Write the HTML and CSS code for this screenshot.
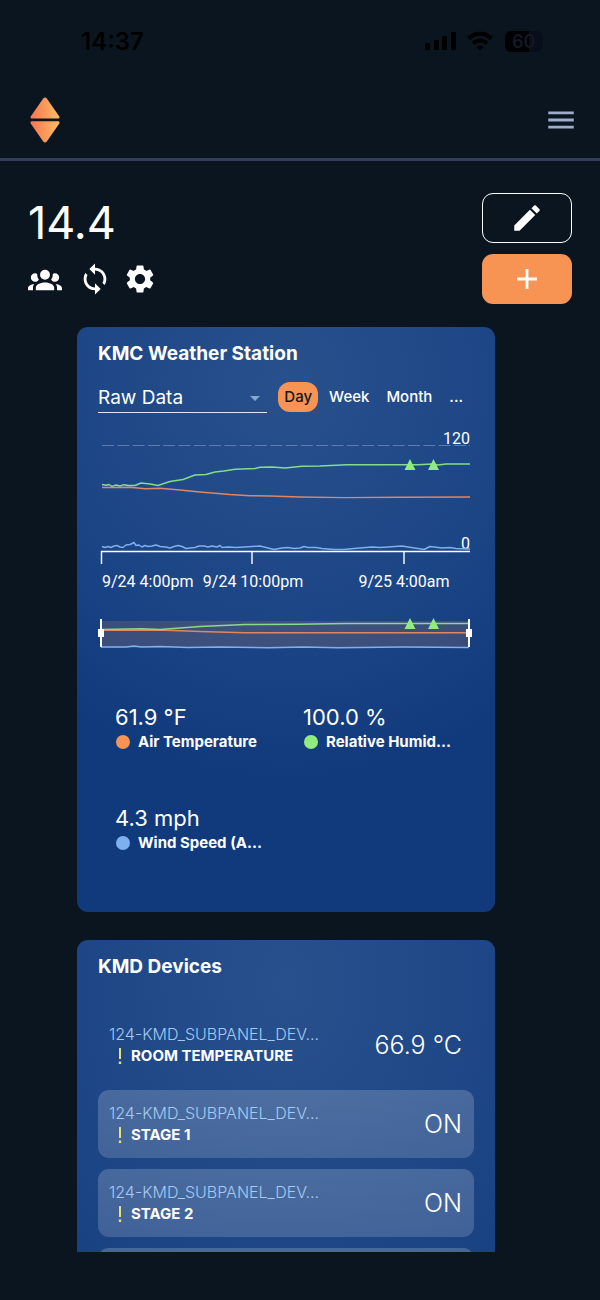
FILE: index.html
```html
<!DOCTYPE html>
<html lang="en">

<head>
    <meta charset="UTF-8">
    <meta name="viewport" content="width=device-width, initial-scale=1.0">
    <title>14.4</title>
    <link rel="stylesheet" href="styles.css">
</head>

<body>
    <div class="status-bar">
        <span class="time">14:37</span>
        <div class="status-icons">
            <svg width="32" height="20" viewBox="0 0 32 20">
                <rect x="0" y="12" width="5" height="7" rx="1"/>
                <rect x="9" y="9" width="5" height="10" rx="1"/>
                <rect x="17" y="5" width="5" height="14" rx="1"/>
                <rect x="26" y="1" width="5" height="18" rx="1"/>
            </svg>
            <svg width="26" height="20" viewBox="0 0 26 20" fill="none" stroke="#000" stroke-width="4">
                <path d="M1.5 7.500C8 1 18 1 24.500 7.500"/>
                <path d="M6 12.500C10 8.500 16 8.500 20 12.500"/>
                <path d="M13 19.500L9.500 16C11.500 14 14.500 14 16.500 16Z" fill="#000" stroke="none"/>
            </svg>
            <span class="battery">60</span>
        </div>
    </div>

    <header class="top-bar">
        <a href="#" class="logo" aria-label="Home">
            <svg width="30" height="46" viewBox="0 0 30 46">
                <defs>
                    <linearGradient id="flame" x1="0" y1="0" x2="1" y2="0">
                        <stop offset="0.1" stop-color="#fb7a52"/>
                        <stop offset="0.9" stop-color="#fdb863"/>
                    </linearGradient>
                </defs>
                <path fill="url(#flame)" d="M13.200 1.500Q15 -.5 16.800 1.500L29.300 19.500Q30 21.500 28 21.500H2Q0 21.500 .7 19.500Z"/>
                <path fill="url(#flame)" d="M13.200 44.500Q15 46.500 16.800 44.500L29.300 26.500Q30 24.300 28 24.300H2Q0 24.300 .7 26.500Z"/>
            </svg>
        </a>
        <button class="icon-btn menu-btn" aria-label="Menu">
            <svg viewBox="0 0 24 24"><path d="M3 18h18v-2H3v2zm0-5h18v-2H3v2zm0-7v2h18V6H3z"/></svg>
        </button>
    </header>

    <main>
        <section class="page-head">
            <div>
                <h1>14.4</h1>
                <div class="tools">
                    <button class="icon-btn people" aria-label="Users">
                        <svg viewBox="0 0 24 24"><path d="M12,5.5A3.5,3.5 0 0,1 15.5,9A3.5,3.5 0 0,1 12,12.5A3.5,3.5 0 0,1 8.500,9A3.5,3.5 0 0,1 12,5.5M5,8C5.56,8 6.08,8.15 6.53,8.42C6.38,9.85 6.8,11.27 7.66,12.38C7.16,13.34 6.16,14 5,14A3,3 0 0,1 2,11A3,3 0 0,1 5,8M19,8A3,3 0 0,1 22,11A3,3 0 0,1 19,14C17.84,14 16.84,13.34 16.34,12.38C17.2,11.27 17.62,9.85 17.47,8.42C17.92,8.15 18.44,8 19,8M5.5,18.25C5.5,16.18 8.41,14.5 12,14.5C15.59,14.5 18.5,16.18 18.5,18.25V20H5.5V18.25M0,20V18.5C0,17.11 1.89,15.94 4.45,15.6C3.86,16.28 3.5,17.22 3.5,18.25V20H0M24,20H20.5V18.25C20.5,17.22 20.14,16.28 19.55,15.6C22.11,15.94 24,17.11 24,18.5V20Z"/></svg>
                    </button>
                    <button class="icon-btn" aria-label="Sync">
                        <svg viewBox="0 0 24 24"><path d="M12 4V1L8 5l4 4V6c3.31 0 6 2.69 6 6 0 1.01-.25 1.97-.7 2.8l1.46 1.46C19.54 15.03 20 13.57 20 12c0-4.42-3.58-8-8-8zm0 14c-3.31 0-6-2.69-6-6 0-1.01.25-1.97.7-2.8L5.24 7.74C4.46 8.97 4 10.43 4 12c0 4.42 3.58 8 8 8v3l4-4-4-4v3z"/></svg>
                    </button>
                    <button class="icon-btn" aria-label="Settings">
                        <svg viewBox="0 0 24 24"><path d="M19.14 12.94c.04-.3.06-.61.06-.94 0-.32-.02-.64-.07-.94l2.03-1.58c.18-.14.23-.41.12-.61l-1.92-3.32c-.12-.22-.37-.29-.59-.22l-2.39.96c-.5-.38-1.030-.7-1.620-.94l-.36-2.540c-.04-.24-.24-.41-.48-.41h-3.840c-.24 0-.43.17-.47.41l-.36 2.540c-.59.24-1.130.57-1.620.94l-2.390-.96c-.22-.08-.47 0-.59.22L2.740 8.870c-.12.21-.08.47.12.61l2.030 1.580c-.05.3-.09.63-.09.94s.02.64.07.94l-2.030 1.580c-.18.14-.23.41-.12.61l1.920 3.320c.12.22.37.29.59.22l2.390-.96c.5.38 1.030.7 1.620.94l.36 2.540c.05.24.24.41.48.41h3.840c.24 0 .44-.17.47-.41l.36-2.540c.59-.24 1.130-.56 1.620-.94l2.390.96c.22.08.47 0 .59-.22l1.920-3.320c.12-.22.07-.47-.12-.61l-2.010-1.580zM12 15.600c-1.980 0-3.600-1.620-3.600-3.600s1.620-3.600 3.600-3.600 3.600 1.620 3.600 3.600-1.620 3.600-3.600 3.600z"/></svg>
                    </button>
                </div>
            </div>
            <div class="actions">
                <button class="action edit" aria-label="Edit">
                    <svg viewBox="0 0 24 24"><path d="M3 17.250V21h3.750L17.810 9.940l-3.750-3.750L3 17.250zM20.710 7.040c.39-.39.39-1.020 0-1.410l-2.340-2.340c-.39-.39-1.020-.39-1.410 0l-1.830 1.830 3.750 3.750 1.830-1.830z"/></svg>
                </button>
                <button class="action add" aria-label="Add">
                    <svg viewBox="0 0 24 24"><path d="M19 13h-6v6h-2v-6H5v-2h6V5h2v6h6v2z"/></svg>
                </button>
            </div>
        </section>

        <section class="cards">
            <article class="card weather">
                <h2>KMC Weather Station</h2>
                <div class="controls">
                    <div class="select-box">
                        <select aria-label="Data type">
                            <option>Raw Data</option>
                        </select>
                    </div>
                    <div class="ranges">
                        <button class="range active">Day</button>
                        <button class="range">Week</button>
                        <button class="range">Month</button>
                        <button class="range">...</button>
                    </div>
                </div>

                <svg class="chart" viewBox="0 0 376 226">
                    <path class="grid" d="M4 20.500H372"/>
                    <text x="372" y="19" text-anchor="end">120</text>
                    <text x="372" y="124" text-anchor="end">0</text>
                    <path class="axis" d="M3.500 139V126.500H372M154 126.500V139M306 126.500V139"/>
                    <text x="4" y="162">9/24 4:00pm</text>
                    <text x="155" y="162" text-anchor="middle">9/24 10:00pm</text>
                    <text x="306" y="162" text-anchor="middle">9/25 4:00am</text>

                    <!-- main series -->
                    <path class="line temp" d="M4 62.500L32 62.300L47 63.700L62 63.300L82 65L102 67L132 69.500L152 70.700L172 71L202 72L247 72.600L302 72.300L372 72"/>
                    <path class="line humid" d="M4 59.500L8 60.300L11 59.500L14 61.300L18 60L22 61L26 59.700L30 60.500L37 60.500L43 58L52 59L60 60.500L66 58.500L72 56.500L85 54.500L97 50L108 49.500L117 47L126 46L137 44.300L157 43.500L162 42.200L174 42L187 43L204 41.300L222 41L249 39.800H320L334 39L340 40L348 39H372"/>
                    <path class="line wind" d="M4 121.500L7 122.500L10 121.500L13 122.500L16 121L19 120.500L22 122L25 122.500L28 120L32 119.500L36 117.500L38 120.500L41 120L44 122L47 120.500L50 121.500L54 121L58 120L62 121.500L68 122L72 123L76 121.500L80 120.500L84 121.500L88 123.500L92 123L97 122.500L101 121L106 121L110 122L114 121L119 122L122 120.500L124 122.500L130 122L138 122.500L146 122L154 121.500L162 121L170 123L176 124.500L184 123L190 122.500L196 123.500L202 123L206 121.500L210 122.500L218 122.500L224 123.500L236 124.500L246 124.500L256 123.500L268 122.500L274 122L282 122.500L290 122L304 121L310 122L320 123.500L326 124.500L332 121.500L344 123L352 122.500L358 123.500L372 124"/>
                    <path class="mark" d="M312 34L317.500 45H306.500ZM335.500 34L341 45H330Z"/>

                    <!-- range selector -->
                    <rect class="window" x="3" y="196" width="368" height="27"/>
                    <path class="line wind" d="M3 222L28 222L36 221L44 222L62 221.500L90 222.500L122 222L170 222.700L206 222L240 222.700L304 222L371 222.500"/>
                    <path class="line temp" d="M3 205.200L62 205L102 206.500L147 207.800L371 207.800"/>
                    <path class="line humid" d="M3 204.500L44 203.800L62 204.500L102 201.500L147 199.500L200 199.300L249 198.500H371"/>
                    <path class="mark" d="M312 193L317.500 204H306.500ZM335.500 193L341 204H330Z"/>
                    <path class="handle" d="M2 194h2v28H2zM0 204h6v8H0zM370 194h2v28h-2zM368 204h6v8h-6z"/>
                </svg>

                <ul class="stats">
                    <li>
                        <div class="stat-value">61.9 °F</div>
                        <div class="stat-label"><i class="dot orange"></i><span>Air Temperature</span></div>
                    </li>
                    <li>
                        <div class="stat-value">100.0 %</div>
                        <div class="stat-label"><i class="dot green"></i><span>Relative Humid...</span></div>
                    </li>
                    <li>
                        <div class="stat-value">4.3 mph</div>
                        <div class="stat-label"><i class="dot blue"></i><span>Wind Speed (A...</span></div>
                    </li>
                </ul>
            </article>

            <article class="card devices">
                <h2>KMD Devices</h2>
                <ul class="device-list">
                    <li class="device plain">
                        <div>
                            <div class="device-name">124-KMD_SUBPANEL_DEV...</div>
                            <div class="point"><svg class="alert" viewBox="0 0 4 16"><path d="M1 0h2v11H1zM.8 13.500h2.400V16H.8z"/></svg>ROOM TEMPERATURE</div>
                        </div>
                        <div class="device-value">66.9 °C</div>
                    </li>
                    <li class="device">
                        <div>
                            <div class="device-name">124-KMD_SUBPANEL_DEV...</div>
                            <div class="point"><svg class="alert" viewBox="0 0 4 16"><path d="M1 0h2v11H1zM.8 13.500h2.400V16H.8z"/></svg>STAGE 1</div>
                        </div>
                        <div class="device-value">ON</div>
                    </li>
                    <li class="device">
                        <div>
                            <div class="device-name">124-KMD_SUBPANEL_DEV...</div>
                            <div class="point"><svg class="alert" viewBox="0 0 4 16"><path d="M1 0h2v11H1zM.8 13.500h2.400V16H.8z"/></svg>STAGE 2</div>
                        </div>
                        <div class="device-value">ON</div>
                    </li>
                    <li class="device"></li>
                </ul>
            </article>
        </section>
    </main>
</body>

</html>
```

FILE: styles.css
```css
* {
    box-sizing: border-box;
}

body {
    margin: 0;
    height: 100vh;
    padding-bottom: 48px;
    display: flex;
    flex-direction: column;
    overflow: hidden;
    background: #0a151f;
    color: #fff;
    font-family: Inter, "Liberation Sans", sans-serif;
}

h1, h2, ul {
    margin: 0;
    padding: 0;
}

ul {
    list-style: none;
}

button, select {
    font-family: inherit;
    color: inherit;
    background: none;
    border: 0;
    padding: 0;
}

svg {
    display: block;
}

/* phone status bar */
.status-bar {
    display: flex;
    justify-content: space-between;
    align-items: center;
    height: 82px;
    padding: 0 57px 0 81px;
    color: #000;
    flex-shrink: 0;
}

.time {
    font-size: 24px;
    font-weight: 600;
}

.status-icons {
    display: flex;
    align-items: center;
    gap: 10px;
}

.battery {
    width: 38px;
    height: 21px;
    margin-left: 2px;
    border-radius: 6px;
    background: linear-gradient(90deg, #000 24px, #080e1a 24px);
    color: #111827;
    font-size: 18px;
    font-weight: 600;
    line-height: 21px;
    padding-left: 7px;
}

/* header */
.top-bar {
    display: flex;
    justify-content: space-between;
    align-items: center;
    height: 79px;
    padding: 0 22px 0 30px;
    border-bottom: 3px solid #343f60;
    flex-shrink: 0;
}

.icon-btn svg {
    width: 34px;
    height: 34px;
    fill: #fff;
}

.menu-btn svg {
    fill: #9dadcb;
}

main {
    flex: 1;
    min-height: 0;
    overflow: hidden;
}

.page-head {
    display: flex;
    justify-content: space-between;
    padding: 32px 28px 23px;
}

h1 {
    font-size: 45px;
    line-height: 60px;
    font-weight: 400;
}

.tools {
    display: flex;
    gap: 11px;
    padding-top: 9px;
}

.people {
    margin-right: 5px;
}

.actions {
    display: flex;
    flex-direction: column;
    gap: 11px;
}

.action {
    display: flex;
    align-items: center;
    justify-content: center;
    width: 90px;
    height: 50px;
    border-radius: 11px;
}

.action svg {
    width: 34px;
    height: 34px;
    fill: #fff;
}

.edit {
    border: 1px solid #fff;
}

.add {
    background: #f79353;
}

/* cards */
.cards {
    display: flex;
    flex-direction: column;
    gap: 28px;
    padding: 0 105px 0 77px;
}

.card {
    padding: 15px 21px 60px;
    border-radius: 11px;
    background: radial-gradient(ellipse 100% 75% at 50% 10%, #28508c, #1c4586 55%, #113a7d 90%);
}

.devices {
    background: radial-gradient(ellipse 100% 130% at 50% 10%, #28508c, #1b4485 60%, #113a7d);
}

h2 {
    font-size: 19px;
    line-height: 24px;
    font-weight: 700;
}

.controls {
    display: flex;
    align-items: flex-start;
    gap: 11px;
    margin-top: 16px;
    height: 32px;
}

.select-box {
    position: relative;
    flex: 1;
    border-bottom: 1px solid #dbe6f6;
}

.select-box::after {
    content: "";
    position: absolute;
    right: 7px;
    top: 14px;
    border: 5px solid transparent;
    border-top-color: #84a9d0;
    border-bottom: 0;
    pointer-events: none;
}

select {
    appearance: none;
    width: 100%;
    height: 30px;
    font-size: 19px;
    font-weight: 400;
}

.ranges {
    display: flex;
    gap: 5px;
    padding-right: 5px;
}

.range {
    height: 30px;
    padding: 0 6px 2px;
    border-radius: 12px;
    font-size: 15px;
    font-weight: 500;
}

.active {
    background: #f79353;
    color: #10161f;
}

.chart {
    width: 100%;
    margin-top: 11px;
    font-family: Roboto, sans-serif;
    font-size: 16px;
    fill: #fff;
    overflow: visible;
}

.grid, .axis, .line {
    fill: none;
}

.grid {
    stroke: #5f7dac;
    stroke-dasharray: 12 3.3;
}

.axis {
    stroke: #fff;
    stroke-width: 1.4;
}

.line {
    stroke-width: 1.4;
    stroke-linejoin: round;
}

.temp {
    stroke: #dd8765;
}

.humid {
    stroke: #85dc8b;
}

.wind {
    stroke: #7db0ee;
}

.mark {
    fill: #90ed7d;
}

.window {
    fill: #f79353;
    fill-opacity: .16;
}

.handle {
    fill: #fff;
}

.stats {
    display: grid;
    grid-template-columns: 1fr 1fr;
    row-gap: 52px;
    margin-top: 51px;
    padding-left: 17px;
    column-gap: 17px;
}

.stat-value {
    font-size: 22px;
    line-height: 30px;
    font-weight: 400;
}

.stat-label {
    display: flex;
    align-items: center;
    gap: 8px;
    font-size: 15px;
    line-height: 19px;
    font-weight: 700;
    white-space: nowrap;
}

.dot {
    width: 14px;
    height: 14px;
    margin-left: 1px;
    border-radius: 50%;
}

.orange {
    background: #f79353;
}

.green {
    background: #90ed7d;
}

.blue {
    background: #7db0ee;
}

/* device list */
.device-list {
    display: flex;
    flex-direction: column;
    gap: 11px;
    margin-top: 32px;
}

.device {
    display: flex;
    justify-content: space-between;
    align-items: center;
    height: 68px;
    padding: 0 12px 0 11px;
    border-radius: 11px;
    background: linear-gradient(rgba(255, 255, 255, .19), rgba(255, 255, 255, .16));
}

.device.plain {
    background: none;
}

.device-name {
    font-size: 16px;
    line-height: 22px;
    font-weight: 300;
    color: #a4caf2;
}

.point {
    display: flex;
    align-items: center;
    font-size: 15px;
    line-height: 22px;
    font-weight: 700;
}

.alert {
    width: 4px;
    height: 16px;
    margin: 0 9px;
    fill: #ece06d;
}

.device-value {
    font-size: 25px;
    font-weight: 300;
}
```
